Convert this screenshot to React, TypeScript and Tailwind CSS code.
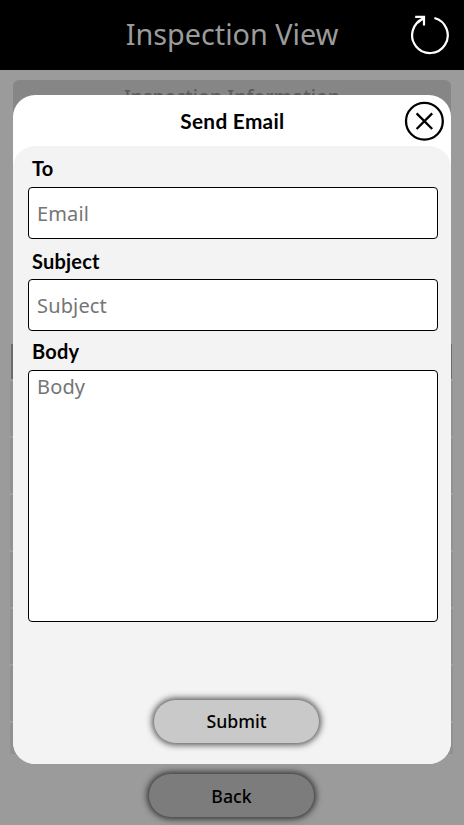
import React from "react";

function RefreshIcon() {
  return (
    <svg width="42" height="42" viewBox="0 0 42 42" fill="none" stroke="#fff" strokeWidth="2.2">
      <path d="M25.4 4A17.8 17.8 0 1 1 14.6 4.6" />
      <path d="M6.2 2.9H15V11.6" />
      <path d="M15 3.4L8.8 8.6" />
    </svg>
  );
}

function CloseIcon() {
  return (
    <svg width="40" height="40" viewBox="0 0 40 40" fill="none" stroke="#000" strokeWidth="2.3">
      <circle cx="20.4" cy="20.2" r="18.4" />
      <path d="M12.6 12.4L28.2 28M28.2 12.4L12.6 28" />
    </svg>
  );
}

const rows = [0, 1, 2, 3, 4, 5, 6];

function Label({ text, className }: { text: string; className: string }) {
  return (
    <label className={`block pl-[4px] font-['Lato',sans-serif] text-[20px] font-bold tracking-[0.2px] text-black ${className}`}>
      {text}
    </label>
  );
}

const field =
  "block w-full rounded-[4px] border border-black bg-white px-[8px] font-['Noto_Sans',sans-serif] text-[20px] tracking-[0.15px] text-black outline-none placeholder:text-[#757575] placeholder:opacity-100";

const button =
  "flex h-[43px] w-[165px] items-center justify-center rounded-[22px] font-['Noto_Sans',sans-serif] text-[17.7px] font-medium text-black";

export default function App() {
  return (
    <div className="relative flex h-[825px] w-[464px] flex-col overflow-hidden bg-[#9b9b9b]">
      <header className="flex h-[70px] shrink-0 items-center justify-between bg-black pr-[13px] pl-[55px]">
        <h1 className="flex-1 pb-[2px] text-center font-['Noto_Sans',sans-serif] text-[28.8px] leading-[40px] text-[#9b9b9b]">
          Inspection View
        </h1>
        <RefreshIcon />
      </header>
      <section className="mx-[13px] mt-[10px] h-[264px] shrink-0 rounded-t-[6px] bg-[#868686] text-center font-['Noto_Sans',sans-serif] text-[19.5px] leading-[34px] font-medium text-[#5c5c5c]">
        Inspection Information
      </section>
      <div className="mr-[11px] ml-[10px] h-[410px] shrink-0">
        <div className="mr-px ml-px h-[35px] bg-[#6b6b6b]" />
        {rows.map((row) => (
          <div key={row} className="h-[57px] border-t-2 border-[#9f9f9f] bg-[#919191] last:h-[33px]" />
        ))}
      </div>
      <footer className="mt-[20px] ml-[149px]">
        <button className={`${button} bg-[#7c7c7c] pt-px shadow-[0_0_6px_2px_#333333]`}>Back</button>
      </footer>

      <div role="dialog" className="absolute top-[95px] left-[13px] flex h-[669px] w-[438px] flex-col rounded-[22px] bg-white">
        <div className="flex h-[51px] shrink-0 items-center justify-end pr-[7px]">
          <h2 className="mr-[119.5px] font-['Lato',sans-serif] text-[20.8px] font-bold tracking-[0.3px] text-black">
            Send Email
          </h2>
          <button aria-label="Close">
            <CloseIcon />
          </button>
        </div>
        <form className="flex flex-1 flex-col rounded-[22px] bg-[#f3f3f3] pr-[13px] pl-[15px]">
          <Label text="To" className="h-[41px] pt-[7px]" />
          <input className={`${field} h-[52px]`} placeholder="Email" />
          <Label text="Subject" className="h-[40px] pt-[7px]" />
          <input className={`${field} h-[52px]`} placeholder="Subject" />
          <Label text="Body" className="h-[39px] pt-[5px]" />
          <textarea className={`${field} h-[252px] resize-none pt-[1px]`} placeholder="Body" />
          <button
            type="button"
            className={`${button} mt-[78px] ml-[126px] bg-[#c9c9c9] shadow-[0_0_6px_2px_#555555]`}
          >
            Submit
          </button>
        </form>
      </div>
    </div>
  );
}
